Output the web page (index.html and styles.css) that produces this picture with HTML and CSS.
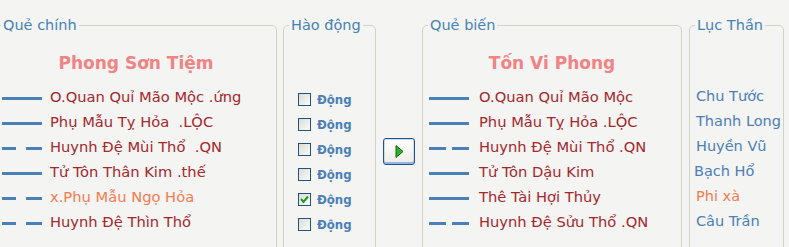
FILE: index.html
```html
<!DOCTYPE html>
<html>
<head>
    <title>Gieo quẻ</title>
    <link rel="stylesheet" href="styles.css">
</head>
<body>
    <div class="panel">
        <fieldset class="group group-main">
            <legend>Quẻ chính</legend>
            <div class="hex-name">Phong Sơn Tiệm</div>
            <ul class="lines">
                <li><span class="yao yang"></span><span class="txt">O.Quan Quỉ Mão Mộc .ứng</span></li>
                <li><span class="yao yang"></span><span class="txt">Phụ Mẫu Tỵ Hỏa&nbsp; .LỘC</span></li>
                <li><span class="yao yin"><i></i><i></i></span><span class="txt">Huynh Đệ Mùi Thổ&nbsp; .QN</span></li>
                <li><span class="yao yang"></span><span class="txt">Tử Tôn Thân Kim .thế</span></li>
                <li><span class="yao yin"><i></i><i></i></span><span class="txt moving">x.Phụ Mẫu Ngọ Hỏa</span></li>
                <li><span class="yao yin"><i></i><i></i></span><span class="txt">Huynh Đệ Thìn Thổ</span></li>
            </ul>
        </fieldset>

        <fieldset class="group group-moving">
            <legend>Hào động</legend>
            <ul class="checks">
                <li><span class="box"></span>Động</li>
                <li><span class="box"></span>Động</li>
                <li><span class="box"></span>Động</li>
                <li><span class="box"></span>Động</li>
                <li><span class="box checked"><svg width="11" height="11" viewBox="0 0 11 11"><polyline points="2,5 4.5,8 9,2.5" fill="none" stroke="#1f9a22" stroke-width="2"/></svg></span>Động</li>
                <li><span class="box"></span>Động</li>
            </ul>
        </fieldset>

        <div class="action">
            <button class="go"><svg width="9" height="13" viewBox="0 0 9 13"><polygon points="1,0.5 8,6.5 1,12.5" fill="#2fae2f" stroke="#126812" stroke-width="1"/></svg></button>
        </div>

        <fieldset class="group group-changed">
            <legend>Quẻ biến</legend>
            <div class="hex-name">Tốn Vi Phong</div>
            <ul class="lines">
                <li><span class="yao yang"></span><span class="txt">O.Quan Quỉ Mão Mộc</span></li>
                <li><span class="yao yang"></span><span class="txt">Phụ Mẫu Tỵ Hỏa .LỘC</span></li>
                <li><span class="yao yin"><i></i><i></i></span><span class="txt">Huynh Đệ Mùi Thổ .QN</span></li>
                <li><span class="yao yang"></span><span class="txt">Tử Tôn Dậu Kim</span></li>
                <li><span class="yao yang"></span><span class="txt">Thê Tài Hợi Thủy</span></li>
                <li><span class="yao yin"><i></i><i></i></span><span class="txt">Huynh Đệ Sửu Thổ .QN</span></li>
            </ul>
        </fieldset>

        <fieldset class="group group-spirits">
            <legend>Lục Thần</legend>
            <ul class="spirits">
                <li>Chu Tước</li>
                <li>Thanh Long</li>
                <li>Huyền Vũ</li>
                <li class="shift">Bạch Hổ</li>
                <li class="moving">Phi xà</li>
                <li>Câu Trần</li>
            </ul>
        </fieldset>
    </div>
</body>
</html>
```

FILE: styles.css
```css
body {
    margin: 0;
    background-color: #f4f4f3;
    font-family: "DejaVu Sans", Verdana, sans-serif;
    overflow: hidden;
}
.panel {
    display: flex;
    align-items: flex-start;
    padding-top: 17px;
    margin-left: -5px;
}
.group {
    box-sizing: border-box;
    height: 250px;
    margin: 0;
    padding: 0;
    border: 1px solid #d2d2c2;
    border-radius: 5px;
}
.group legend {
    margin-left: 5px;
    padding: 0 2px;
    font-size: 14.5px;
    line-height: 16px;
    color: #4682b4;
}
.group-main {
    width: 282px;
}
.group-moving {
    width: 93px;
    margin-left: 6px;
}
.group-changed {
    width: 260px;
}
.group-spirits {
    width: 95px;
    margin-left: 7px;
}
.action {
    width: 46px;
    display: flex;
    justify-content: center;
    padding-top: 121px;
}
.go {
    width: 32px;
    height: 27px;
    padding: 0;
    display: flex;
    align-items: center;
    justify-content: center;
    border: 1px solid #25508a;
    border-radius: 3px;
    background: linear-gradient(#ffffff, #ecebe4);
    box-shadow: inset 0 -2px 0 #93b5e6, inset 0 0 0 1px #c9dbf3;
}
.hex-name {
    margin-top: 18px;
    height: 24px;
    line-height: 24px;
    text-align: center;
    font-size: 17px;
    font-weight: bold;
    color: #f08383;
}
.lines, .checks, .spirits {
    list-style: none;
    margin: 0;
    padding: 0;
}
.lines {
    margin-top: 9px;
    padding-left: 6px;
}
.lines li {
    display: flex;
    align-items: center;
    height: 25px;
}
.yao {
    display: flex;
    justify-content: space-between;
    width: 40px;
    height: 3px;
    margin-top: 4px;
    margin-right: 8px;
}
.yang {
    background-color: #4a80b6;
}
.yin i {
    width: 14px;
    height: 3px;
    background-color: #4a80b6;
}
.yin i + i {
    width: 16px;
}
.group-changed .yao {
    margin-right: 10px;
}
.group-changed .yin i {
    width: 17px;
}
.txt {
    font-size: 14.7px;
    color: #a3282c;
    white-space: nowrap;
}
.moving {
    color: #f47b50 !important;
}
.checks {
    padding-top: 54px;
    padding-left: 14px;
}
.checks li {
    display: flex;
    align-items: center;
    height: 25px;
    font-family: "DejaVu Sans Condensed", "DejaVu Sans", sans-serif;
    font-size: 13px;
    font-weight: bold;
    color: #4a80b6;
}
.box {
    box-sizing: border-box;
    width: 13px;
    height: 13px;
    margin-right: 6px;
    border: 1px solid #1e5385;
    background: linear-gradient(135deg, #dcdcd4, #fbfbf9);
    display: flex;
    align-items: center;
    justify-content: center;
}
.spirits {
    padding-top: 51px;
    padding-left: 6px;
}
.spirits li {
    height: 25px;
    line-height: 25px;
    font-size: 14.5px;
    color: #4a80b6;
    white-space: nowrap;
}
.spirits .shift {
    margin-left: -2px;
}
```
